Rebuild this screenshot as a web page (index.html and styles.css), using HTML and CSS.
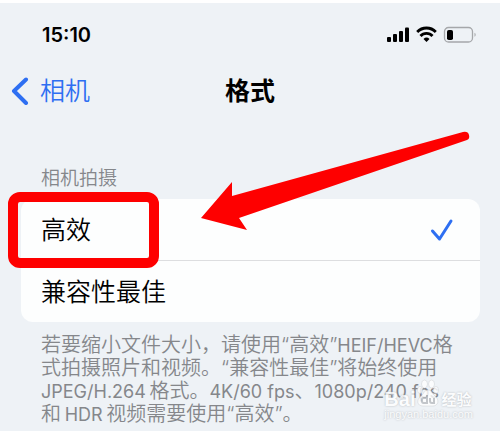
FILE: index.html
```
<!DOCTYPE html>
<html lang="zh-CN">
<head>
  <meta charset="utf-8">
  <meta name="viewport" content="width=device-width, initial-scale=1">
  <title>格式</title>
  <link rel="stylesheet" href="styles.css">
</head>
<body>
  <div class="status">
    <time class="clock">15:10</time>
    <svg class="status-icons" width="92" height="18" viewBox="0 0 92 18" aria-hidden="true">
      <rect x="1" y="11" width="4" height="5" rx="1"/>
      <rect x="7" y="8" width="4" height="8" rx="1"/>
      <rect x="13" y="5" width="4" height="11" rx="1"/>
      <rect x="19" y="1.5" width="4" height="14.5" rx="1"/>
      <g class="wifi">
        <path d="M31.2 6a12.8 12.8 0 0 1 18.6 0"/>
        <path d="M34.5 10a8 8 0 0 1 12 0"/>
      </g>
      <path d="M37.5 13a4.4 4.4 0 0 1 6 0L40.5 16z"/>
      <rect class="battery" x="58.5" y="1.5" width="28" height="14.5" rx="4"/>
      <rect x="61" y="4" width="6" height="10" rx="1.8"/>
      <path class="battery-tip" d="M88.5 6.7a2.3 2.3 0 0 1 0 4z"/>
    </svg>
  </div>

  <header class="nav">
    <a class="back" href="#">
      <svg width="18" height="28" viewBox="0 0 18 28" aria-hidden="true">
        <path d="M15 2.5 3 14 15 26"/>
      </svg>
      相机
    </a>
    <h1>格式</h1>
  </header>

  <main>
    <h2>相机拍摄</h2>
    <div class="options">
      <label class="option">
        <input type="radio" name="format" checked>
        <span>高效</span>
        <svg class="tick" width="24" height="24" viewBox="0 0 24 24" aria-hidden="true">
          <path d="M2.5 13 9.5 21 21 3"/>
        </svg>
      </label>
      <label class="option">
        <input type="radio" name="format">
        <span>兼容性最佳</span>
        <svg class="tick" width="24" height="24" viewBox="0 0 24 24" aria-hidden="true">
          <path d="M2.5 13 9.5 21 21 3"/>
        </svg>
      </label>
      <div class="highlight"></div>
      <svg class="arrow" width="270" height="102" viewBox="0 0 270 102" aria-hidden="true">
        <path d="M1 87 32 51 32 65 263 1Q268 0 269 4Q270 8 267 9L39 87 47 99z"/>
      </svg>
    </div>
    <p class="note">若要缩小文件大小，请使用“高效”<span class="latin">HEIF/HEVC</span>格<br>式拍摄照片和视频。“兼容性最佳”将始终使用<br><span class="latin">JPEG/H.264</span>&thinsp;格式。<span class="latin">4K/60 fps</span>、<span class="latin">1080p/240 fps</span><br>和&thinsp;<span class="latin">HDR</span>&thinsp;视频需要使用“高效”。</p>
  </main>

  <div class="watermark">
    <div class="brand">
      <span>Bai</span>
      <svg width="22" height="28" viewBox="0 0 22 28" aria-hidden="true">
        <ellipse cx="3" cy="11" rx="2.5" ry="3.5"/>
        <ellipse cx="7.5" cy="5" rx="3" ry="4"/>
        <ellipse cx="14.5" cy="5" rx="3" ry="4"/>
        <ellipse cx="19" cy="11" rx="2.5" ry="3.5"/>
        <path d="M11 11c4 0 4 4 7 6 5 4 3 10-2 10H6c-6 0-7-6-2-10 3-2 3-6 7-6z"/>
        <path class="du" d="M10 16v8H6.5q-1.5 0-1.5-2v-1q0-2 1.5-2H10M13 19v3q0 2 2 2h2v-5"/>
      </svg>
      <span class="brand-cn">经验</span>
    </div>
    <div class="site">jingyan.baidu.com</div>
  </div>
</body>
</html>
```
FILE: styles.css
```
:root {
  --bg: #eef2f6;
  --blue: #2e6ff2;
  --gray: #85878b;
  --red: #fe0000;
  --line: #dddee0;
}

* {box-sizing: border-box}

body {
  position: relative;
  margin: 0;
  min-height: 100vh;
  border-top: 3px solid #fff;
  background-color: var(--bg);
  color: #000;
  font: 350 25px/36px Inter, "Noto Sans CJK SC", sans-serif;
}

.status {
  display: flex;
  align-items: center;
  justify-content: space-between;
  padding: 20px 22px 0 42px;
  height: 44px;
}

.clock {
  font-size: 20px;
  font-weight: 600;
  line-height: 24px;
}

.wifi, .battery {fill: none}

.wifi {
  stroke: #000;
  stroke-width: 2.8;
}

.battery {
  stroke: #a5a7aa;
  stroke-width: 1.3;
}

.battery-tip {fill: #a5a7aa}

.nav {
  display: grid;
  grid-template-columns: 1fr auto 1fr;
  align-items: center;
  padding: 26px 11px 0;
}

.back {
  display: flex;
  align-items: center;
  gap: 11px;
  color: var(--blue);
  text-decoration: none;
}

.back path, .tick path {
  fill: none;
  stroke: var(--blue);
  stroke-width: 3;
  stroke-linecap: round;
  stroke-linejoin: round;
}

.back path {stroke-width: 4}

h1 {
  margin: 0;
  font-size: 25px;
  font-weight: 600;
}

main {padding: 58px 20px 0 21px}

h2 {
  margin: 0;
  padding: 0 20px 8px;
  color: var(--gray);
  font-size: 19px;
  font-weight: 350;
  line-height: 24px;
}

.options {
  position: relative;
  background-color: #fdfefe;
  border-radius: 12px;
}

.option {
  display: flex;
  align-items: center;
  justify-content: space-between;
  padding: 0 26px 0 20px;
  height: 61px;
}

.option + .option {
  border-top: 1px solid var(--line);
  height: 62px;
}

.option input {
  position: absolute;
  opacity: 0;
}

.tick {visibility: hidden}

input:checked ~ .tick {visibility: visible}

/* red box and arrow drawn over the first option */
.highlight {
  position: absolute;
  top: -7px;
  left: -13px;
  width: 151px;
  height: 76px;
  border: 10px solid var(--red);
  border-radius: 12px;
}

.arrow {
  position: absolute;
  top: -68px;
  left: 179px;
  fill: var(--red);
}

.note {
  margin: 0;
  padding: 12px 0 0 20px;
  color: var(--gray);
  font-size: 20px;
  line-height: 23px;
  white-space: nowrap;
}

.latin {
  font-size: 18px;
  font-weight: 400;
}

.watermark {
  position: absolute;
  right: 27px;
  bottom: 10px;
  color: #fff;
  opacity: .8;
  text-shadow: 0 0 2px #a5a8ac;
}

.brand {
  display: flex;
  align-items: flex-end;
  gap: 2px;
  font: 700 20px/16px "Liberation Sans", sans-serif;
}

.brand svg {
  fill: #fff;
  stroke: #c5c7ca;
  stroke-width: .5;
}

.brand .du {
  fill: none;
  stroke: #b9bcc0;
  stroke-width: 2;
}

.brand-cn {
  font-family: "Noto Sans CJK SC", sans-serif;
  font-size: 15px;
}

.site {
  font: 11px/14px "Liberation Sans", sans-serif;
}
```
